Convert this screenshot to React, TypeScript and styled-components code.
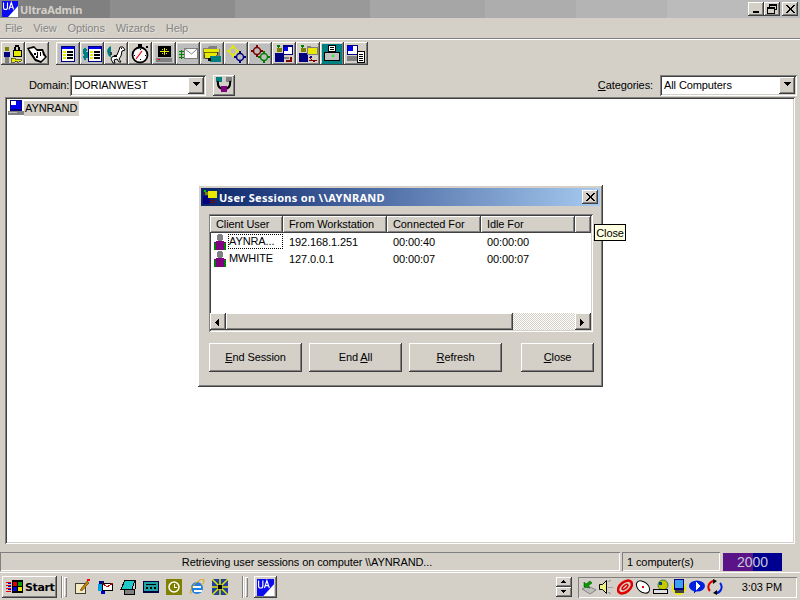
import React from "react";
import styled, { createGlobalStyle, css } from "styled-components";

const Global = createGlobalStyle`
  html, body { margin: 0; padding: 0; background: #d4d0c8; }
  #root { width: 800px; height: 600px; overflow: hidden; }
  * { box-sizing: border-box; }
  svg { display: block; shape-rendering: crispEdges; }
`;

const raised = css`
  box-shadow: inset -1px -1px #404040, inset 1px 1px #fff, inset -2px -2px #808080, inset 2px 2px #d4d0c8;
`;
const sunken = css`
  box-shadow: inset 1px 1px #808080, inset -1px -1px #fff, inset 2px 2px #404040, inset -2px -2px #d4d0c8;
`;
const uiFont = css`
  font: 11px "Liberation Sans", Arial, sans-serif;
  letter-spacing: -0.1px;
`;
const boldFont = css`
  font: bold 11px "Noto Sans", "DejaVu Sans", sans-serif;
`;

const Page = styled.div`
  ${uiFont}
  position: relative;
  width: 800px;
  height: 600px;
  display: flex;
  flex-direction: column;
  overflow: hidden;
  background: #d4d0c8;
  color: #000;
`;
const TitleBar = styled.div`
  height: 18px;
  flex: none;
  display: flex;
  align-items: center;
  padding: 0 2px;
  background: linear-gradient(90deg, #808080 0 110px, #8d8d8d 110px 235px, #999 235px 370px, #a6a6a6 370px 485px, #adadad 485px 576px, #b4b4b4 576px 667px, #bbb 667px);
`;
const AppTitle = styled.span`
  ${boldFont}
  color: #d4d0c8;
  margin-left: 2px;
  flex: 1;
`;
const WinButton = styled.button<{ $gap?: number }>`
  ${raised}
  width: 16px;
  height: 14px;
  border: 0;
  padding: 0;
  margin-left: ${(p) => p.$gap ?? 0}px;
  background: #d4d0c8;
  display: flex;
  align-items: center;
  justify-content: center;
`;
const MenuBar = styled.div`
  height: 20px;
  flex: none;
  display: flex;
  align-items: center;
  padding-left: 5px;
  gap: 11px;
  color: #868686;
  text-shadow: 1px 1px 0 #e4e1da;
`;
const Rule = styled.div`
  height: 2px;
  flex: none;
  background: #808080;
  border-bottom: 1px solid #fff;
`;
const Toolbar = styled.div`
  height: 27px;
  flex: none;
  display: flex;
  align-items: center;
  padding: 0 0 0 1px;
`;
const ToolGroup = styled.div<{ $gap?: number }>`
  display: flex;
  margin-right: ${(p) => p.$gap ?? 0}px;
`;
const ToolButton = styled.button`
  ${raised}
  width: 24px;
  height: 23px;
  border: 0;
  padding: 0;
  background: #d4d0c8;
  display: flex;
  align-items: center;
  justify-content: center;
`;
const FilterRow = styled.div`
  height: 30px;
  flex: none;
  display: flex;
  align-items: center;
  padding: 6px 3px 0 29px;
`;
const FieldLabel = styled.label<{ $gap: number }>`
  margin-right: ${(p) => p.$gap}px;
`;
const Combo = styled.div<{ $width: number }>`
  ${sunken}
  width: ${(p) => p.$width}px;
  height: 21px;
  background: #fff;
  display: flex;
  align-items: center;
  justify-content: space-between;
  padding: 2px 2px 2px 4px;
`;
const ComboArrow = styled.span`
  ${raised}
  width: 16px;
  height: 17px;
  background: #d4d0c8;
  display: flex;
  align-items: center;
  justify-content: center;
`;
const RefreshButton = styled(ToolButton)`
  width: 22px;
  height: 21px;
  margin-left: 7px;
`;
const Spacer = styled.div`
  flex: 1;
`;
const Tree = styled.div`
  ${sunken}
  flex: none;
  height: 447px;
  margin: 0 5px;
  background: #fff;
  padding: 3px 3px;
`;
const TreeItem = styled.div`
  display: flex;
  align-items: center;
`;
const TreeLabel = styled.span`
  background: #d4d0c8;
  padding: 1px 2px 1px 1px;
  line-height: 13px;
`;
const StatusBar = styled.div`
  margin-top: 8px;
  height: 19px;
  flex: none;
  display: flex;
  gap: 2px;
`;
const StatusCell = styled.div<{ $width: number; $center?: boolean }>`
  width: ${(p) => p.$width}px;
  height: 19px;
  box-shadow: inset 1px 1px #808080, inset -1px -1px #fff;
  display: flex;
  align-items: center;
  justify-content: ${(p) => (p.$center ? "center" : "flex-start")};
  padding: 0 ${(p) => (p.$center ? 11 : 0)}px 0 5px;
`;
const VersionBadge = styled.div`
  width: 59px;
  height: 18px;
  margin-left: 1px;
  margin-top: 1px;
  display: flex;
  align-items: center;
  justify-content: center;
  font-size: 14px;
  letter-spacing: 0;
  color: #c8c8d8;
  background: linear-gradient(90deg, #5a1488 0 30px, #000090 30px);
`;
const Taskbar = styled.div`
  flex: 1;
  border-top: 1px solid #fff;
  margin-top: 1px;
  display: flex;
  align-items: center;
  padding: 1px 3px 0 2px;
`;
const StartButton = styled.button`
  ${raised}
  width: 55px;
  height: 22px;
  border: 0;
  background: #d4d0c8;
  display: flex;
  align-items: center;
  gap: 0;
  padding: 0 0 0 3px;
  font: bold 11px "DejaVu Sans", sans-serif;
  letter-spacing: -0.4px;
  color: #000;
`;
const Divider = styled.div<{ $left: number; $right: number }>`
  width: 2px;
  height: 22px;
  margin: 0 ${(p) => p.$right}px 0 ${(p) => p.$left}px;
  border-left: 1px solid #808080;
  border-right: 1px solid #fff;
`;
const Grip = styled.div<{ $right: number }>`
  width: 3px;
  height: 20px;
  margin-right: ${(p) => p.$right}px;
  box-shadow: inset 1px 1px #fff, inset -1px -1px #808080;
`;
const QuickLaunch = styled.div`
  display: flex;
  gap: 7px;
`;
const TaskButton = styled.div`
  ${raised}
  width: 23px;
  height: 22px;
  display: flex;
  align-items: center;
  justify-content: center;
`;
const Spin = styled.div`
  display: flex;
  flex-direction: column;
  margin-right: 6px;
`;
const SpinButton = styled.div`
  ${raised}
  width: 16px;
  height: 10px;
  display: flex;
  align-items: center;
  justify-content: center;
`;
const Tray = styled.div`
  width: 219px;
  height: 21px;
  box-shadow: inset 1px 1px #808080, inset -1px -1px #fff;
  display: flex;
  align-items: center;
  padding-left: 3px;
`;
const TrayIcons = styled.div`
  display: flex;
  gap: 2px;
`;
const Clock = styled.span`
  margin-left: auto;
  margin-right: 15px;
`;
const Dialog = styled.div`
  ${raised}
  position: absolute;
  left: 198px;
  top: 185px;
  width: 405px;
  height: 202px;
  background: #d4d0c8;
  padding: 3px;
  display: flex;
  flex-direction: column;
`;
const DialogTitle = styled.div`
  ${boldFont}
  letter-spacing: 0.3px;
  height: 18px;
  flex: none;
  background: linear-gradient(90deg, #0a246a, #a6caf0);
  display: flex;
  align-items: center;
  padding: 0 2px 0 1px;
  color: #fff;
`;
const DialogCaption = styled.span`
  flex: 1;
  margin-left: 1px;
`;
const ListView = styled.div`
  ${sunken}
  flex: none;
  height: 118px;
  margin: 8px 7px 0 8px;
  padding: 2px 2px 2px 1px;
  background: #fff;
  display: flex;
  flex-direction: column;
`;
const HeaderRow = styled.div`
  height: 17px;
  flex: none;
  display: flex;
`;
const HeaderCell = styled.div<{ $width: number }>`
  ${raised}
  width: ${(p) => p.$width}px;
  background: #d4d0c8;
  display: flex;
  align-items: center;
  padding: 0 0 1px 6px;
`;
const Rows = styled.div`
  flex: 1;
`;
const Row = styled.div`
  height: 17px;
  display: flex;
  align-items: center;
  padding-left: 3px;
`;
const NameCell = styled.div`
  width: 70px;
  display: flex;
  align-items: center;
  flex: none;
`;
const NameText = styled.span<{ $focused?: boolean }>`
  width: 55px;
  padding-left: 1px;
  line-height: 15px;
  outline: ${(p) => (p.$focused ? "1px dotted #000" : "none")};
  outline-offset: -1px;
`;
const Cell = styled.div<{ $width: number }>`
  width: ${(p) => p.$width}px;
  flex: none;
  padding-left: 6px;
`;
const HScroll = styled.div`
  height: 17px;
  flex: none;
  display: flex;
  background-color: #fff;
  background-image: conic-gradient(#d4d0c8 25%, #fff 0 50%, #d4d0c8 0 75%, #fff 0);
  background-size: 2px 2px;
  justify-content: space-between;
`;
const ScrollLeft = styled.div`
  display: flex;
`;
const ScrollArrow = styled.div`
  ${raised}
  width: 16px;
  height: 17px;
  background: #d4d0c8;
  display: flex;
  align-items: center;
  justify-content: center;
`;
const ScrollThumb = styled.div`
  ${raised}
  width: 287px;
  height: 17px;
  background: #d4d0c8;
`;
const Actions = styled.div`
  flex: none;
  display: flex;
  margin: 11px 6px 0 8px;
`;
const ActionButton = styled.button<{ $width: number; $gap: number }>`
  ${raised}
  ${uiFont}
  width: ${(p) => p.$width}px;
  height: 29px;
  margin-right: ${(p) => p.$gap}px;
  border: 0;
  padding: 0 0 2px;
  background: #d4d0c8;
  color: #000;
`;
const Tip = styled.div`
  position: absolute;
  left: 594px;
  top: 224px;
  width: 32px;
  height: 17px;
  background: #ffffe1;
  border: 1px solid #000;
  display: flex;
  align-items: center;
  justify-content: center;
`;

type IconProps = { size?: number };
const Svg: React.FC<React.PropsWithChildren<{ size?: number; box?: number; w?: number; h?: number }>> = ({ size = 20, box = 20, w, h, children }) => (
  <svg width={w ?? size} height={h ?? size} viewBox={`0 0 ${w ?? box} ${h ?? box}`}>{children}</svg>
);
const smooth = { shapeRendering: "auto" as const };

const Tri: React.FC<{ dir: "down" | "up" | "left" | "right" | "smallDown" | "smallUp" }> = ({ dir }) => {
  const d = {
    down: "M0 0h7v1h-1v1h-1v1h-1v1h-1v-1h-1v-1h-1v-1h-1z",
    up: "M3 0h1v1h1v1h1v1h1v1h-7v-1h1v-1h1v-1h1z",
    left: "M3 0h1v7h-1v-1h-1v-1h-1v-1h-1v-1h1v-1h1v-1h1z",
    right: "M0 0h1v1h1v1h1v1h1v1h-1v1h-1v1h-1v1h-1z",
    smallDown: "M0 1h5v1h-1v1h-1v1h-1v-1h-1v-1h-1z",
    smallUp: "M2 1h1v1h1v1h1v1h-5v-1h1v-1h1z",
  }[dir];
  return <svg width={8} height={8} viewBox="0 0 8 8"><path d={d} fill="#000" transform="translate(0.5 1)" /></svg>;
};

const UaLogo: React.FC<IconProps> = ({ size = 16 }) => (
  <svg width={size} height={size} viewBox="0 0 16 16" style={smooth}>
    <rect width="16" height="16" fill="#0b0bf0" />
    <path d="M16 5V16H6z" fill="#fff" />
    <path d="M1.500 1.500v5q0 2 2 2t2-2v-5M7 8.500l2.300-7 2.300 7M8 6.200h2.700" fill="none" stroke="#fff" strokeWidth="1.100" />
  </svg>
);
const Person: React.FC = () => (
  <Svg w={15} h={16}>
    <path d="M4 1h1V0h4v1h1v5H9v1H5V6H4z" fill="#808080" />
    <path d="M3 7h8v1h2v8H1V8h2z" fill="#800080" />
    <path d="M1 9h2v7H1zM11 9h2v7h-2z" fill="#008000" />
  </Svg>
);
const PC: React.FC<IconProps> = ({ size = 16 }) => (
  <Svg size={size} box={16}>
    <rect x="2" y="0" width="12" height="11" fill="#000080" />
    <rect x="3" y="1" width="10" height="8" fill="#0000f0" />
    <rect x="3" y="1" width="5" height="4" fill="#fff" />
    <rect x="0" y="11" width="16" height="4" fill="#808080" />
    <rect x="1" y="12" width="8" height="1" fill="#c0c0c0" />
  </Svg>
);

const UserFig = () => (
  <>
    <rect x="3" y="4" width="5" height="4" fill="#808000" />
    <rect x="1" y="9" width="9" height="9" fill="#000080" />
  </>
);
const ListWin: React.FC<{ x?: number }> = ({ x = 3 }) => (
  <>
    <rect x={x} y="2" width="14" height="16" fill="#000080" />
    <rect x={x + 1} y="3" width="12" height="2" fill="#0000f0" />
    <rect x={x + 1} y="5" width="12" height="12" fill="#fff" />
    {[7, 10, 13].map((y) => (
      <g key={y}>
        <rect x={x + 2} y={y} width="3" height="2" fill="#e8e800" />
        <rect x={x + 6} y={y} width="6" height="2" fill="#000" />
      </g>
    ))}
  </>
);
const Gear: React.FC<{ cx: number; cy: number; c: string }> = ({ cx, cy, c }) => (
  <g>
    <circle cx={cx} cy={cy} r="3.500" fill="none" stroke={c} strokeWidth="1.500" style={smooth} />
    <path d={`M${cx - 1} ${cy - 6}h2v2h-2zM${cx - 1} ${cy + 4}h2v2h-2zM${cx - 6} ${cy - 1}h2v2h-2zM${cx + 4} ${cy - 1}h2v2h-2z`} fill={c} />
  </g>
);
const Tile = () => <rect x="0" y="0" width="20" height="20" fill="#bdbdbd" />;

const tools: React.ReactNode[] = [
  <Svg key="1">
    <rect x="2" y="3" width="4" height="4" fill="#808000" />
    <rect x="1" y="8" width="6" height="5" fill="#000080" />
    <rect x="2" y="13" width="4" height="6" fill="#808080" />
    <rect x="10" y="6" width="8" height="6" fill="#e8e800" stroke="#000" />
    <path d="M11 6V3h1V1h4v2h1v3h-2V3h-2v3z" fill="#000" />
    <path d="M8 14h4v1h6v2h-2v1h-2v-1h-2v1H8z" fill="#e8e800" stroke="#000" strokeWidth="0.500" />
  </Svg>,
  <Svg key="2">
    <path d="M0 4l7-2 3 3h6l2 5 2 3-6 6-6-2-5-7z" fill="#000" style={smooth} />
    <path d="M2 5l5-1 3 3h5l1 4 2 2-4 4-5-2-4-6z" fill="#fff" style={smooth} />
    <path d="M7 9h2v2H7zM10 8h1v4h-1zM13 8h1v4h-1zM9 12h2v2H9z" fill="#000" />
  </Svg>,
  <Svg key="3"><Tile /><ListWin /></Svg>,
  <Svg key="4">
    <Tile />
    <ListWin x={6} />
    <path d="M5 6H2v3h3v4H1M3 4v12" fill="none" stroke="#008080" strokeWidth="1.500" />
  </Svg>,
  <Svg key="5">
    <path d="M1 7q1-4 4-5v11q-3 0-4-6z" fill="#008080" style={smooth} />
    <path d="M5 5l1 6h-2z" fill="#404040" />
    <path d="M6 13l5-2 2-5 1-3h3l2 3-3 1-1 5-2 3 2 3h-2l-2-3-3 1 1 3H7l-2-4z" fill="#fff" stroke="#000" style={smooth} />
    <path d="M8 11h3v2H8zM15 4h1v1h-1z" fill="#000" />
  </Svg>,
  <Svg key="6">
    <circle cx="10" cy="11" r="7.500" fill="#fff" stroke="#000" strokeWidth="1.800" style={smooth} />
    <path d="M8 0h4v3H8zM16 2h2v2h-2z" fill="#000" />
    <path d="M6 15l6-8" stroke="#f00" strokeWidth="1.200" style={smooth} />
    <path d="M10 5v1M15 11h1M10 15v1M4 11h1" stroke="#000" />
  </Svg>,
  <Svg key="7">
    <rect x="1" y="1" width="18" height="18" fill="#bdbdbd" />
    <rect x="4" y="2" width="13" height="11" fill="#000" />
    <path d="M10 4h1v7h-1zM6 7h9v1H6zM8 5h1v1H8zM12 5h1v1h-1zM8 9h1v1H8zM12 9h1v1h-1z" fill="#e8e800" />
    <rect x="2" y="14" width="16" height="4" fill="#808080" />
    <rect x="4" y="15" width="2" height="1" fill="#f00" />
  </Svg>,
  <Svg key="8">
    <Tile />
    <rect x="6.500" y="4.500" width="13" height="10" fill="#fff" stroke="#808080" />
    <path d="M7 5l6.500 5L19 5" fill="none" stroke="#808080" style={smooth} />
    <path d="M1 7h5v1H1zM1 10h5v1H1zM1 13h5v1H1z" fill="#008000" />
    <path d="M3 6h1v9H3z" fill="#008000" />
  </Svg>,
  <Svg key="9">
    <Tile />
    <path d="M1 4h5l1-2h8v3h3v10H1z" fill="#808080" />
    <path d="M2 5h15v3H2z" fill="#e8e800" />
    <path d="M2 8h14l-2 6H3z" fill="#e8e800" stroke="#000" strokeWidth="0.500" />
    <rect x="8" y="12" width="11" height="6" fill="#008080" />
    <rect x="6" y="14" width="3" height="3" fill="#000" />
  </Svg>,
  <Svg key="10"><Tile /><Gear cx={7} cy={7} c="#e8e800" /><Gear cx={14} cy={13} c="#000080" /></Svg>,
  <Svg key="11"><Tile /><Gear cx={7} cy={7} c="#800000" /><Gear cx={14} cy={13} c="#008000" /></Svg>,
  <Svg key="12">
    <UserFig />
    <path d="M3 1h3v2H5v1H4V3H3z" fill="#008000" />
    <rect x="9" y="1" width="10" height="10" fill="#000080" />
    <rect x="10" y="3" width="8" height="7" fill="#fff" />
    <rect x="10" y="3" width="4" height="4" fill="#0000f0" />
    <path d="M16 13h2v5h-6v-2h4z" fill="#800000" />
    <rect x="10" y="13" width="5" height="2" fill="#808080" />
  </Svg>,
  <Svg key="13">
    <UserFig />
    <path d="M3 1h3v2H5v1H4V3H3z" fill="#008000" />
    <rect x="9.500" y="3.500" width="10" height="7" fill="#e8e800" stroke="#808080" />
    <path d="M9 2h4v1H9z" fill="#808080" />
    <path d="M11 13l3 3 3 2M11 17l3-1h5" fill="none" stroke="#800000" />
    <rect x="12" y="12" width="2" height="2" fill="#000080" />
  </Svg>,
  <Svg key="14">
    <rect x="0" y="0" width="20" height="20" fill="#008080" />
    <rect x="6.500" y="1.500" width="7" height="6" fill="#fff" stroke="#000" />
    <path d="M8 3.500h4M8 5.500h4" stroke="#000" />
    <rect x="2.500" y="8.500" width="15" height="8" fill="#c0c0c0" stroke="#000" />
    <rect x="10" y="11" width="2" height="2" fill="#0f0" />
  </Svg>,
  <Svg key="15">
    <rect x="1" y="1" width="11" height="10" fill="#000080" />
    <rect x="2" y="2" width="9" height="8" fill="#fff" />
    <rect x="2" y="2" width="5" height="5" fill="#0000f0" />
    <rect x="1" y="12" width="10" height="5" fill="#808080" />
    <rect x="11.500" y="7.500" width="7" height="11" fill="#fff" stroke="#000" />
    <path d="M13 10.500h4M13 12.500h4M13 14.500h4M13 16.500h4" stroke="#000" />
  </Svg>,
];

const ConnectIcon = () => (
  <Svg size={16} box={16}>
    <rect x="0" y="0" width="6" height="5" fill="#008080" />
    <rect x="10" y="0" width="6" height="5" fill="#808080" />
    <path d="M2 4q-1 7 5 8M14 4q1 7-5 8" fill="none" stroke="#000" strokeWidth="2" style={smooth} />
    <rect x="5" y="9" width="6" height="6" fill="#800080" />
  </Svg>
);

const quick: React.ReactNode[] = [
  <Svg key="a" size={16} box={16}>
    <rect x="1.500" y="4.500" width="10" height="10" fill="#f4ecc0" stroke="#404040" />
    <path d="M6 11l7-9 2 2-7 8z" fill="#c88000" stroke="#404040" strokeWidth=".5" />
    <rect x="13" y="0" width="3" height="2" fill="#f00" />
  </Svg>,
  <Svg key="b" size={16} box={16}>
    <path d="M2 2h5v3H2z" fill="#000080" />
    <path d="M1 5h5v7H1z" fill="#00a0e0" />
    <rect x="5.500" y="4.500" width="10" height="7" fill="#fff" stroke="#000" />
    <path d="M5 4l5 4 6-4" fill="none" stroke="#c00000" />
    <path d="M4 12h4v3H4z" fill="#0000c0" />
  </Svg>,
  <Svg key="c" size={16} box={16}>
    <path d="M5 1h10l-3 9H1z" fill="#20c8c8" stroke="#000" />
    <path d="M4 10h10v5H4z" fill="#808080" stroke="#000" />
    <path d="M15 1v9l-1 5" fill="none" stroke="#000" />
  </Svg>,
  <Svg key="d" size={16} box={16}>
    <rect x="0" y="2" width="16" height="12" fill="#000040" />
    <rect x="1" y="3" width="14" height="9" fill="#20a0a0" />
    <path d="M3 5h10v1H3zM3 8h2v2H3zM7 8h2v2H7zM11 8h2v2h-2z" fill="#000" />
  </Svg>,
  <Svg key="e" size={16} box={16}>
    <rect x="0" y="0" width="16" height="16" fill="#808000" />
    <circle cx="8" cy="8" r="5" fill="#808000" stroke="#fff" strokeWidth="1.500" style={smooth} />
    <path d="M8 5v3h3" fill="none" stroke="#fff" />
  </Svg>,
  <Svg key="f" size={16} box={16}>
    <circle cx="8" cy="9" r="6" fill="#2080e0" style={smooth} />
    <path d="M4 8h8M5 12h8" stroke="#fff" strokeWidth="1.500" />
    <path d="M2 15Q0 10 7 4T15 1q1 3-3 5" fill="none" stroke="#e0a000" style={smooth} />
  </Svg>,
  <Svg key="g" size={16} box={16}>
    <rect x="0" y="0" width="16" height="16" fill="#2040a0" />
    <path d="M0 0l16 16M16 0L0 16M8 0v16M0 8h16" stroke="#e8e800" strokeWidth="1.500" style={smooth} />
    <rect x="6" y="6" width="4" height="4" fill="#000" />
  </Svg>,
];

const tray: React.ReactNode[] = [
  <Svg key="a" size={16} box={16}>
    <path d="M1 10l6-3 8 4-6 4z" fill="#c0c0c0" stroke="#404040" strokeWidth=".5" style={smooth} />
    <path d="M3 8V3l2 2 4-3 2 2-4 3 2 2z" fill="#00a000" stroke="#004000" strokeWidth=".5" style={smooth} />
  </Svg>,
  <Svg key="b" size={16} box={16}>
    <path d="M.5 5.500h3l4-4v13l-4-4h-3z" fill="#f0f080" stroke="#000" style={smooth} />
    <path d="M9 3l3-2M9 8h5M9 13l3 2" stroke="#a0a0a0" />
  </Svg>,
  <Svg key="c" size={16} box={16}>
    <ellipse cx="8" cy="8" rx="8" ry="5" fill="none" stroke="#e00000" strokeWidth="2.500" transform="rotate(-40 8 8)" style={smooth} />
    <ellipse cx="8" cy="8" rx="3.500" ry="1.500" fill="none" stroke="#e00000" strokeWidth="1.500" transform="rotate(-40 8 8)" style={smooth} />
  </Svg>,
  <Svg key="d" size={16} box={16}>
    <ellipse cx="8" cy="8" rx="7.500" ry="5" fill="#fff" stroke="#000" transform="rotate(40 8 8)" style={smooth} />
    <path d="M7 7h2v2H7z" fill="#e00000" />
  </Svg>,
  <Svg key="e" size={16} box={16}>
    <circle cx="10" cy="6" r="5" fill="#c8c800" stroke="#408040" style={smooth} />
    <rect x="0.500" y="10.500" width="14" height="4" fill="#e0e0e0" stroke="#000" />
    <rect x="6" y="3" width="3" height="3" fill="#004080" />
  </Svg>,
  <Svg key="f" size={16} box={16}>
    <circle cx="8" cy="9" r="7" fill="#e8e800" style={smooth} />
    <rect x="3" y="0" width="10" height="11" fill="#000080" />
    <rect x="4" y="1" width="8" height="8" fill="#40a0f0" />
    <path d="M4 11h9v3H4z" fill="#404040" />
  </Svg>,
  <Svg key="g" size={16} box={16}>
    <ellipse cx="8" cy="7" rx="8" ry="5.500" fill="#0020e0" style={smooth} />
    <path d="M7 3v8l4-4z" fill="#fff" />
    <path d="M5 11h3l-3 3z" fill="#0020e0" />
  </Svg>,
  <Svg key="h" size={16} box={16}>
    <g style={smooth}>
      <path d="M8 2A6 6 0 0 0 3 12" fill="none" stroke="#e00000" strokeWidth="2" />
      <path d="M8 14A6 6 0 0 0 13 4" fill="none" stroke="#0020e0" strokeWidth="2" />
      <path d="M6 0l4 2-4 3zM10 11v5l-4-2z" fill="#000" />
    </g>
  </Svg>,
];

const WinLogo = () => (
  <Svg size={20} box={20}>
    <path d="M7 3h11v13H7z" fill="#000" />
    <path d="M8 5h4v4H8z" fill="#e00000" />
    <path d="M13 5h4v4h-4z" fill="#00a000" />
    <path d="M8 10h4v4H8z" fill="#0000e0" />
    <path d="M13 10h4v4h-4z" fill="#e8e800" />
    <path d="M1 5h5v1H1zM1 8h5v1H1zM1 11h5v1H1zM1 14h5v1H1z" fill="#e00000" />
    <path d="M3 6h3v1H3zM3 9h3v1H3zM3 12h3v1H3z" fill="#0000e0" />
  </Svg>
);

const sessions = [
  { name: "AYNRA...", ip: "192.168.1.251", conn: "00:00:40", idle: "00:00:00", focused: true },
  { name: "MWHITE", ip: "127.0.0.1", conn: "00:00:07", idle: "00:00:07", focused: false },
];

export default function App() {
  return (
    <Page>
      <Global />
      <TitleBar>
        <UaLogo />
        <AppTitle>UltraAdmin</AppTitle>
        <WinButton aria-label="Minimize">
          <svg width="8" height="8" viewBox="0 0 8 8"><rect x="1" y="6" width="6" height="2" fill="#000" /></svg>
        </WinButton>
        <WinButton aria-label="Restore">
          <svg width="10" height="10" viewBox="0 0 10 10"><path d="M2.500 2.500V.5h7v5h-2M.5 3.500h7v6h-7z" fill="none" stroke="#000" /><path d="M2 0h8v2H2zM0 3h8v2H0z" fill="#000" /></svg>
        </WinButton>
        <WinButton $gap={2} aria-label="Close">
          <svg width="9" height="8" viewBox="0 0 9 8"><path d="M0 0h2l2.500 3L7 0h2L5.500 4 9 8H7L4.500 5 2 8H0l3.500-4z" fill="#000" /></svg>
        </WinButton>
      </TitleBar>
      <MenuBar>
        <span>File</span><span>View</span><span>Options</span><span>Wizards</span><span>Help</span>
      </MenuBar>
      <Rule />
      <Toolbar>
        <ToolGroup $gap={7}>{tools.slice(0, 2).map((t, i) => <ToolButton key={i}>{t}</ToolButton>)}</ToolGroup>
        <ToolGroup>{tools.slice(2).map((t, i) => <ToolButton key={i}>{t}</ToolButton>)}</ToolGroup>
      </Toolbar>
      <FilterRow>
        <FieldLabel $gap={1}>Domain:</FieldLabel>
        <Combo $width={136}>DORIANWEST<ComboArrow><Tri dir="down" /></ComboArrow></Combo>
        <RefreshButton><ConnectIcon /></RefreshButton>
        <Spacer />
        <FieldLabel $gap={7}><u>C</u>ategories:</FieldLabel>
        <Combo $width={137}>All Computers<ComboArrow><Tri dir="down" /></ComboArrow></Combo>
      </FilterRow>
      <Tree>
        <TreeItem><PC /><TreeLabel>AYNRAND</TreeLabel></TreeItem>
      </Tree>
      <StatusBar>
        <StatusCell $width={620} $center>Retrieving user sessions on computer \\AYNRAND...</StatusCell>
        <StatusCell $width={98}>1 computer(s)</StatusCell>
        <VersionBadge>2000</VersionBadge>
      </StatusBar>
      <Taskbar>
        <StartButton><WinLogo />Start</StartButton>
        <Divider $left={4} $right={1} />
        <Grip $right={7} />
        <QuickLaunch>{quick.map((q, i) => <span key={i}>{q}</span>)}</QuickLaunch>
        <Divider $left={14} $right={1} />
        <Grip $right={6} />
        <TaskButton><UaLogo size={17} /></TaskButton>
        <Spacer />
        <Spin>
          <SpinButton><Tri dir="smallUp" /></SpinButton>
          <SpinButton><Tri dir="smallDown" /></SpinButton>
        </Spin>
        <Tray>
          <TrayIcons>{tray.map((q, i) => <span key={i}>{q}</span>)}</TrayIcons>
          <Clock>3:03 PM</Clock>
        </Tray>
      </Taskbar>

      <Dialog>
        <DialogTitle>
          <Svg size={16} box={16}>
            <rect x="3" y="3" width="3" height="3" fill="#808000" />
            <rect x="1" y="7" width="7" height="8" fill="#000080" />
            <rect x="6" y="2" width="9" height="7" fill="#e8e800" />
            <path d="M8 11l5 3M8 14l5-3" stroke="#800000" />
            <rect x="2" y="1" width="2" height="2" fill="#00c000" />
          </Svg>
          <DialogCaption>User Sessions on \\AYNRAND</DialogCaption>
          <WinButton aria-label="Close dialog">
            <svg width="9" height="8" viewBox="0 0 9 8"><path d="M0 0h2l2.500 3L7 0h2L5.500 4 9 8H7L4.500 5 2 8H0l3.500-4z" fill="#000" /></svg>
          </WinButton>
        </DialogTitle>
        <ListView>
          <HeaderRow>
            <HeaderCell $width={73}>Client User</HeaderCell>
            <HeaderCell $width={104}>From Workstation</HeaderCell>
            <HeaderCell $width={94}>Connected For</HeaderCell>
            <HeaderCell $width={94}>Idle For</HeaderCell>
            <HeaderCell $width={16} />
          </HeaderRow>
          <Rows>
            {sessions.map((s) => (
              <Row key={s.name}>
                <NameCell>
                  <Person />
                  <NameText $focused={s.focused}>{s.name}</NameText>
                </NameCell>
                <Cell $width={104}>{s.ip}</Cell>
                <Cell $width={94}>{s.conn}</Cell>
                <Cell $width={94}>{s.idle}</Cell>
              </Row>
            ))}
          </Rows>
          <HScroll>
            <ScrollLeft>
              <ScrollArrow><Tri dir="left" /></ScrollArrow>
              <ScrollThumb />
            </ScrollLeft>
            <ScrollArrow><Tri dir="right" /></ScrollArrow>
          </HScroll>
        </ListView>
        <Actions>
          <ActionButton $width={93} $gap={7}><u>E</u>nd Session</ActionButton>
          <ActionButton $width={93} $gap={7}>End <u>A</u>ll</ActionButton>
          <ActionButton $width={93} $gap={19}><u>R</u>efresh</ActionButton>
          <ActionButton $width={73} $gap={0}><u>C</u>lose</ActionButton>
        </Actions>
      </Dialog>
      <Tip>Close</Tip>
    </Page>
  );
}
